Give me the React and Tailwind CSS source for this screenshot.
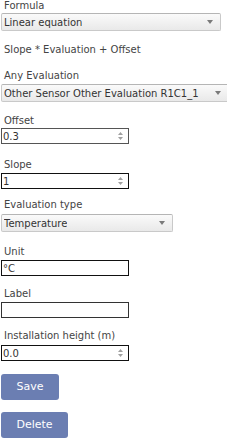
import React from 'react';

const font = { fontFamily: '"DejaVu Sans", Verdana, sans-serif' };

// flecha del desplegable
const Caret = () => (
  <svg width="6" height="4" viewBox="0 0 6 4" className="shrink-0">
    <path d="M0 0h6L3 4z" fill="#7a7a7a" />
  </svg>
);

// flechas del campo numérico
const Spinner = () => (
  <svg width="5" height="8" viewBox="0 0 5 8" className="shrink-0">
    <path d="M2.5 0L5 3H0z" fill="#a0a0a0" />
    <path d="M0 5h5L2.5 8z" fill="#a0a0a0" />
  </svg>
);

const Label = ({ children, className = '' }) => (
  <div className={`text-[10px] leading-[12px] text-[#444] pl-[3px] ${className}`}>{children}</div>
);

const Select = ({ value, width, className = '' }) => (
  <div
    className={`flex items-center justify-between h-[18px] border border-[#c9c9c9] border-t-[#b5b5b5] rounded-[2px] bg-gradient-to-b from-[#fafafa] to-[#e9e9e9] pl-[2px] pr-[7px] text-[10px] text-[#333] ${width} ${className}`}
  >
    <span className="whitespace-nowrap overflow-hidden">{value}</span>
    <Caret />
  </div>
);

const Field = ({ value, number, border = 'border-[#111]', className = '' }) => (
  <div className={`flex items-center w-[128px] h-[16px] border ${border} bg-white pr-[5px] ${className}`}>
    <input
      readOnly
      value={value}
      className="flex-1 min-w-0 h-full px-[1px] text-[10px] text-[#333] bg-transparent outline-none"
      style={font}
    />
    {number && <Spinner />}
  </div>
);

const Button = ({ children, width, className = '' }) => (
  <button
    className={`h-[26px] ${width} rounded-[3px] bg-[#6b7eb2] text-white text-[11px] ${className}`}
    style={font}
  >
    {children}
  </button>
);

export default function App() {
  return (
    <div className="w-[227px] h-[439px] overflow-hidden bg-white pl-[1px]" style={font}>
      <div className="flex flex-col items-start">
        <Label>Formula</Label>
        <Select value="Linear equation" width="w-[220px]" className="mt-[1px]" />

        <Label className="mt-[13px]">Slope * Evaluation + Offset</Label>

        <Label className="mt-[14px]">Any Evaluation</Label>
        <Select value="Other Sensor Other Evaluation R1C1_1" width="w-[228px]" className="mt-[2px]" />

        <Label className="mt-[13px]">Offset</Label>
        <Field value="0.3" number border="border-[#555]" className="mt-[1px]" />

        <Label className="mt-[15px]">Slope</Label>
        <Field value="1" number className="mt-[2px]" />

        <Label className="mt-[10px]">Evaluation type</Label>
        <Select value="Temperature" width="w-[172px]" className="mt-[3px]" />

        <Label className="mt-[14px]">Unit</Label>
        <Field value="°C" className="mt-[2px]" />

        <Label className="mt-[12px]">Label</Label>
        <Field value="" border="border-[#333]" className="mt-[2px]" />

        <Label className="mt-[12px]">Installation height (m)</Label>
        <Field value="0.0" number className="mt-[3px]" />

        <Button width="w-[58px]" className="mt-[13px]">Save</Button>
        <Button width="w-[67px]" className="mt-[12px]">Delete</Button>
      </div>
    </div>
  );
}
